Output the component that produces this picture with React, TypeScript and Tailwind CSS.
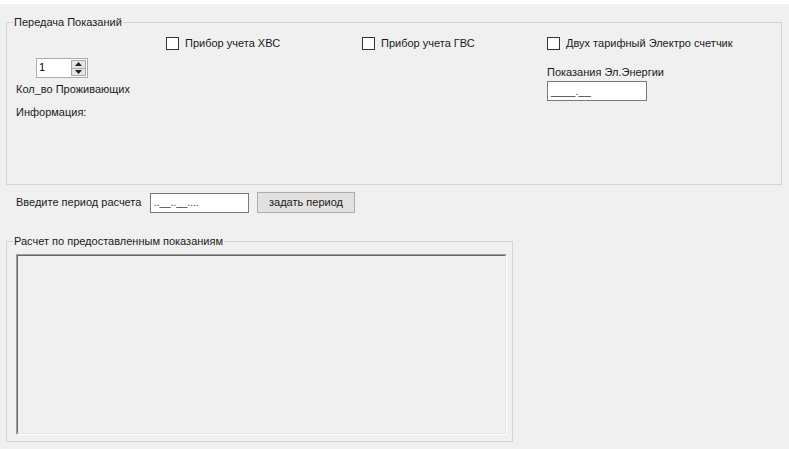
import { FC, ReactNode } from 'react';

const font = "font-['Liberation_Sans',Arial,sans-serif] text-[11px] leading-[13px] text-black";

const CheckBox: FC<{ label: string; className?: string }> = ({ label, className = '' }) => (
  <label className={`flex items-center gap-[6px] ${className}`}>
    <span className="block h-[13px] w-[13px] border border-[#333333] bg-white" />
    <span className="whitespace-nowrap text-[#1a1a1a]">{label}</span>
  </label>
);

const GroupBox: FC<{ title: string; className?: string; children: ReactNode }> = ({
  title,
  className = '',
  children,
}) => (
  <fieldset className={`border border-[#d5d5d5] ${className}`}>
    <legend className="ml-[6px] px-[1px] text-[#1a1a1a]">{title}</legend>
    {children}
  </fieldset>
);

const TextBox: FC<{ value: string; className?: string }> = ({ value, className = '' }) => (
  <div className={`flex h-[20px] items-center border border-[#7a7a7a] bg-white pl-[3px] text-[#333] ${className}`}>
    {value}
  </div>
);

const Spinner: FC = () => (
  <div className="ml-[20px] flex h-[20px] w-[52px] border border-[#abadb3] bg-white">
    <div className="flex-1 pl-[2px] pt-[2px]">1</div>
    <div className="my-[1px] mr-[1px] flex w-[15px] flex-col">
      <div className="flex flex-1 items-center justify-center border border-[#acacac] bg-[#e5e5e5]">
        <svg width="7" height="4" viewBox="0 0 7 4">
          <path d="M0 4 L3.5 0 L7 4 Z" fill="#222" />
        </svg>
      </div>
      <div className="flex flex-1 items-center justify-center border border-t-0 border-[#acacac] bg-[#e5e5e5]">
        <svg width="7" height="4" viewBox="0 0 7 4">
          <path d="M0 0 L3.5 4 L7 0 Z" fill="#222" />
        </svg>
      </div>
    </div>
  </div>
);

export default function App() {
  return (
    <div className={`h-[449px] w-[789px] overflow-hidden border-t-4 border-white bg-[#f0f0f0] ${font}`}>
      <GroupBox title="Передача Показаний" className="ml-[6px] mt-[12px] h-[169px] w-[776px]">
        <div className="flex pl-[9px] pt-[8px]">
          <div className="w-[150px] pt-[21px]">
            <Spinner />
            <div className="mt-[5px] text-[#1a1a1a]">Кол_во Проживающих</div>
            <div className="mt-[10px] text-[#1a1a1a]">Информация:</div>
          </div>
          <div className="w-[196px]">
            <CheckBox label="Прибор учета ХВС" />
          </div>
          <div className="w-[185px]">
            <CheckBox label="Прибор учета ГВС" />
          </div>
          <div>
            <CheckBox label="Двух тарифный Электро счетчик" />
            <div className="mt-[16px] text-[#1a1a1a]">Показания Эл.Энергии</div>
            <TextBox value="____.__" className="mt-[2px] w-[100px]" />
          </div>
        </div>
      </GroupBox>

      <div className="mt-[7px] flex items-center pl-[16px]">
        <span className="w-[134px] whitespace-nowrap text-[#1a1a1a]">Введите период расчета</span>
        <TextBox value="..__..__...." className="w-[99px] text-[10px]" />
        <button className="ml-[8px] h-[21px] w-[98px] border border-[#adadad] bg-[#e1e1e1] text-[#1a1a1a]">
          задать период
        </button>
      </div>

      <GroupBox title="Расчет по предоставленным показаниям" className="ml-[6px] mt-[22px] h-[207px] w-[507px]">
        <div className="ml-[9px] mt-[6px] h-[181px] w-[491px] border border-b-white border-l-[#a0a0a0] border-r-white border-t-[#a0a0a0]">
          <div className="h-full w-full border border-b-[#e3e3e3] border-l-[#696969] border-r-[#e3e3e3] border-t-[#696969] bg-[#f0f0f0]" />
        </div>
      </GroupBox>
    </div>
  );
}
